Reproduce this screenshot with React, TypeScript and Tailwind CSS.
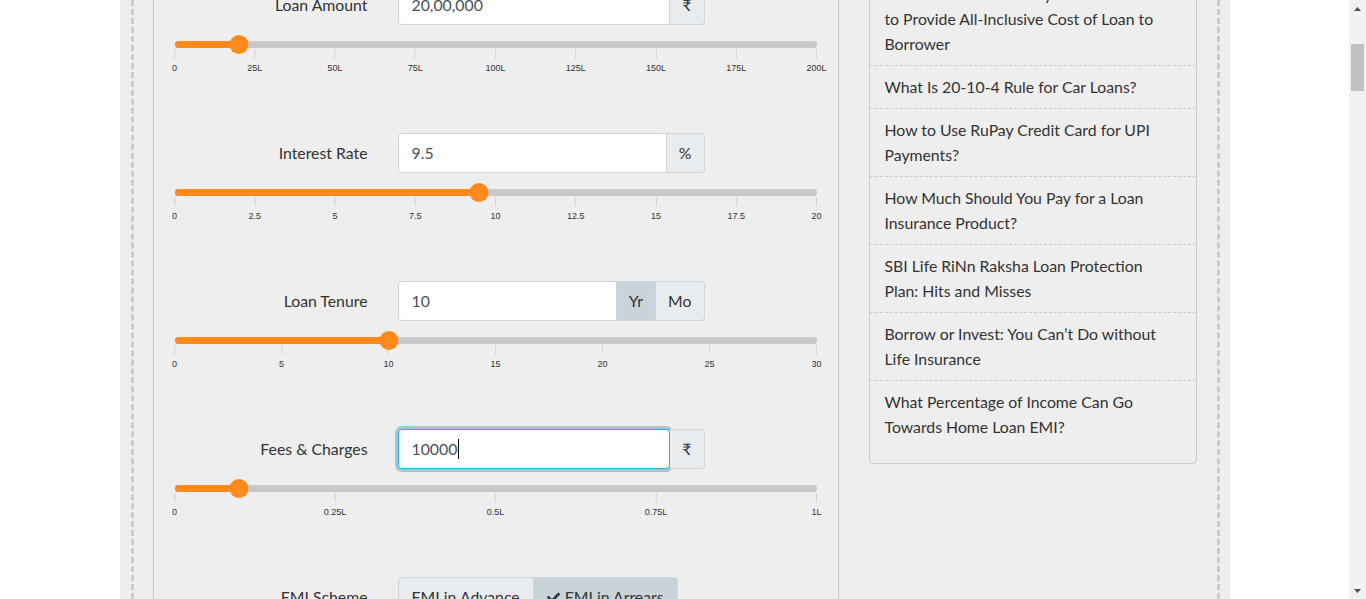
import { FaCheck } from "react-icons/fa";

const Slider = ({ value, max, ticks }: { value: number; max: number; ticks: string[] }) => {
  const pct = (value / max) * 100;
  return (
    <div className="relative ml-[21px] mt-[16px] h-[34px] w-[642px]">
      <div className="h-[7px] rounded-full bg-[#c8c8c8]">
        <div className="h-full rounded-full bg-[#ff8a1c]" style={{ width: `${pct}%` }} />
      </div>
      {ticks.map((t, i) => (
        <div
          key={t}
          className="absolute top-[8px] flex -translate-x-1/2 flex-col items-center"
          style={{ left: `${(i / (ticks.length - 1)) * 100}%` }}
        >
          <div className="h-[9px] w-px bg-[#d2d2d8]" />
          <span className="mt-[5px] font-['Liberation_Sans',sans-serif] text-[9px] leading-[11px] text-[#333]">{t}</span>
        </div>
      ))}
      <div
        className="absolute top-[-6px] h-[19px] w-[19px] -translate-x-1/2 rounded-full bg-[#ff8a1c]"
        style={{ left: `${pct}%` }}
      />
    </div>
  );
};

const Addon = ({ children, active, last }: { children: React.ReactNode; active?: boolean; last?: boolean }) => (
  <div
    className={
      active
        ? "flex items-center border border-l-0 border-[#ced4da] bg-[#c8d3da] px-3 text-[15.8px] text-[#333]"
        : last
          ? "flex items-center rounded-r-[4px] border border-l-0 border-[#ced4da] bg-[#e9ecef] px-3 text-[15.8px] text-[#333]"
          : "flex items-center border border-l-0 border-[#ced4da] bg-[#e9ecef] px-3 text-[15.8px] text-[#333]"
    }
  >
    {children}
  </div>
);

const Field = ({ value, children }: { value: string; children: React.ReactNode }) => (
  <div className="flex h-[40px] w-[307px]">
    <div className="flex flex-1 items-center rounded-l-[4px] border border-[#ced4da] bg-white px-[13px] text-[15.8px] text-[#495057]">
      {value}
    </div>
    {children}
  </div>
);

const Row = ({ label, field, slider }: { label: string; field: React.ReactNode; slider?: React.ReactNode }) => (
  <div className="h-[148px] shrink-0">
    <div className="flex items-center">
      <div className="w-[214px] text-right text-[15.8px] text-[#333]">{label}</div>
      <div className="ml-[30px]">{field}</div>
    </div>
    {slider}
  </div>
);

const articles = [
  "How to Use RuPay Credit Card for UPI Payments?",
  "How Much Should You Pay for a Loan Insurance Product?",
  "SBI Life RiNn Raksha Loan Protection Plan: Hits and Misses",
  "Borrow or Invest: You Can’t Do without Life Insurance",
  "What Percentage of Income Can Go Towards Home Loan EMI?",
];

const Scrollbar = () => (
  <div className="flex h-full w-[17px] shrink-0 flex-col bg-[#f1f1f1]">
    <div className="flex h-[17px] items-center justify-center">
      <svg width="7" height="4" viewBox="0 0 7 4">
        <path d="M3.5 0L7 4H0Z" fill="#505050" />
      </svg>
    </div>
    <div className="mx-[2px] mt-[27px] h-[47px] bg-[#c1c1c1]" />
    <div className="flex-1" />
    <div className="flex h-[17px] items-center justify-center">
      <svg width="7" height="4" viewBox="0 0 7 4">
        <path d="M0 0H7L3.5 4Z" fill="#505050" />
      </svg>
    </div>
  </div>
);

export default function App() {
  return (
    <div className="flex h-[599px] overflow-hidden bg-white font-['Lato',sans-serif]">
      <div className="h-full flex-1 overflow-hidden">
        <div className="mx-auto h-full w-[1110px] bg-[#eeeeee] pl-[11px] pr-[10px]">
          <div className="flex h-full items-start border-x-[3px] border-dashed border-[#cccccc] pl-[19px]">
            {/* calculator panel */}
            <div className="flex h-full w-[686px] shrink-0 flex-col border-x border-[#cccccc]">
              <div className="-mt-[15px] flex flex-col">
                <Row
                  label="Loan Amount"
                  field={
                    <Field value="20,00,000">
                      <Addon last>₹</Addon>
                    </Field>
                  }
                  slider={
                    <Slider
                      value={20}
                      max={200}
                      ticks={["0", "25L", "50L", "75L", "100L", "125L", "150L", "175L", "200L"]}
                    />
                  }
                />
                <Row
                  label="Interest Rate"
                  field={
                    <Field value="9.5">
                      <Addon last>%</Addon>
                    </Field>
                  }
                  slider={
                    <Slider value={9.5} max={20} ticks={["0", "2.5", "5", "7.5", "10", "12.5", "15", "17.5", "20"]} />
                  }
                />
                <Row
                  label="Loan Tenure"
                  field={
                    <Field value="10">
                      <Addon active>Yr</Addon>
                      <Addon last>Mo</Addon>
                    </Field>
                  }
                  slider={<Slider value={10} max={30} ticks={["0", "5", "10", "15", "20", "25", "30"]} />}
                />
                <Row
                  label="Fees & Charges"
                  field={
                    <div className="flex h-[40px] w-[307px]">
                      <div className="flex flex-1 items-center rounded-[4px] border border-[#1eb4f0] bg-white px-[13px] text-[15.8px] text-[#495057] shadow-[0_0_0_3px_rgba(110,150,170,0.5)]">
                        10000
                        <span className="ml-px h-[20px] w-px bg-black" />
                      </div>
                      <Addon last>₹</Addon>
                    </div>
                  }
                  slider={<Slider value={0.1} max={1} ticks={["0", "0.25L", "0.5L", "0.75L", "1L"]} />}
                />
                <Row
                  label="EMI Scheme"
                  field={
                    <div className="flex h-[40px]">
                      <div className="flex items-center rounded-l-[4px] border border-[#ced4da] bg-[#e9ecef] px-[13px] text-[15.8px] text-[#333]">
                        EMI in Advance
                      </div>
                      <div className="flex items-center gap-[5px] rounded-r-[4px] border border-l-0 border-[#ced4da] bg-[#c8d3da] px-[13px] text-[15.8px] text-[#333]">
                        <FaCheck className="text-[13px]" />
                        EMI in Arrears
                      </div>
                    </div>
                  }
                />
              </div>
            </div>

            {/* related articles */}
            <div className="ml-[30px] -mt-[28px] w-[328px] shrink-0 rounded-[4px] border border-[#cccccc] pb-[15px] text-[15.8px] leading-[25px] text-[#333]">
              <div className="pb-[9px] pl-[15px] pr-[17px] pt-2">
                RBI Makes It Mandatory for Lenders
                <br />
                to Provide All-Inclusive Cost of Loan to Borrower
              </div>
              <div className="border-t border-dashed border-[#cccccc] pb-[9px] pl-[15px] pr-[17px] pt-2">
                What Is 20-10-4 Rule for Car Loans?
              </div>
              {articles.map((a) => (
                <div key={a} className="border-t border-dashed border-[#cccccc] pb-[9px] pl-[15px] pr-[17px] pt-2">
                  {a}
                </div>
              ))}
            </div>
          </div>
        </div>
      </div>
      <Scrollbar />
    </div>
  );
}
